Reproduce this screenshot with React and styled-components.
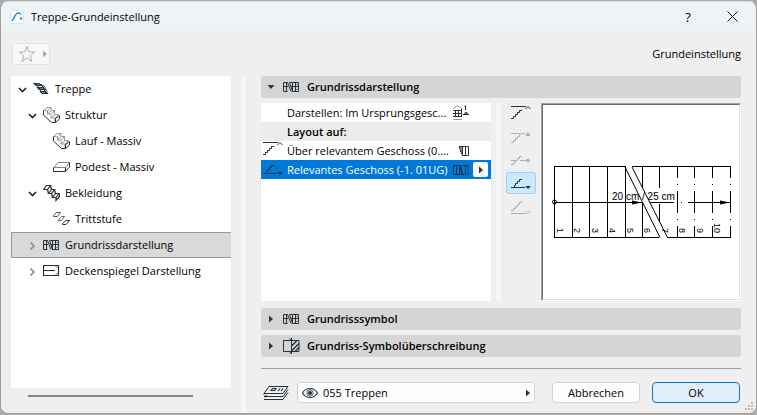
import styled, { createGlobalStyle, css } from 'styled-components';

const ink = '#26323a';

const GlobalStyle = createGlobalStyle`
  * {
    box-sizing: border-box;
  }

  body {
    margin: 0;
    background: #adadad;
    color: #000000;
    font-family: 'Open Sans', 'Noto Sans', sans-serif;
    font-size: 11px;
    line-height: 16px;
  }

  button, select {
    font: inherit;
    color: inherit;
    padding: 0;
    margin: 0;
    border: none;
    background: none;
  }

  svg {
    display: block;
    flex-shrink: 0;
  }
`;

const Backdrop = styled.div`
  display: flex;
  min-height: 100vh;
  padding: 1px 0;
`;

const Dialog = styled.section`
  position: relative;
  flex: 1;
  display: flex;
  flex-direction: column;
  background: #efefef;
  border: 1px solid #a0a0a0;
  border-top-color: #d8dcde;
  border-radius: 8px;
  overflow: hidden;
`;

const TitleBar = styled.header`
  display: flex;
  align-items: center;
  height: 29px;
  padding: 0 17px 0 9px;
  background: #eef3f6;
`;

const DialogTitle = styled.h1`
  flex: 1;
  margin: 0 0 0 7px;
  font-size: 11px;
  font-weight: 400;
`;

const TitleButton = styled.button`
  display: flex;
  align-items: center;
  justify-content: center;
  width: 14px;
  height: 20px;
  margin-left: 30px;
  font-size: 13px;
`;

const Toolbar = styled.div`
  display: flex;
  align-items: center;
  justify-content: space-between;
  height: 45px;
  padding: 0 15px 0 11px;
`;

const FavoriteButton = styled.button`
  display: flex;
  align-items: center;
  gap: 5px;
  width: 38px;
  height: 22px;
  padding-left: 5px;
  background: #f8f8f8;
  border: 1px solid #e3e3e3;
  border-radius: 3px;
`;

const Body = styled.div`
  flex: 1;
  display: flex;
  padding: 0 15px 0 10px;
`;

const Sidebar = styled.nav`
  flex: 0 0 220px;
  display: flex;
  flex-direction: column;
`;

const Tree = styled.ul`
  flex: 1;
  margin: 0;
  padding: 0;
  list-style: none;
  background: #ffffff;
`;

const TreeItem = styled.button`
  display: flex;
  align-items: center;
  width: 100%;
  height: 26px;
  padding-left: ${({ $level }) => 7 + $level * 10}px;
  text-align: left;
  white-space: nowrap;

  ${({ $selected }) =>
    $selected &&
    css`
      background: #d9d9d9;
      box-shadow: inset 1px 1px #999999, inset 0 -1px #999999;
    `}
`;

const ChevronSlot = styled.span`
  width: 9px;
  margin-right: 6px;
`;

const TreeLabel = styled.span`
  margin-left: 5px;
`;

const ScrollTrack = styled.div`
  height: 25px;
  padding: 7px 38px 0 17px;
`;

const ScrollThumb = styled.div`
  height: 2px;
  background: #868686;
`;

const Splitter = styled.div`
  width: 5px;
  margin: ${({ $wide }) => ($wide ? '0 15px 0 10px' : '0 5px')};
  background: #f7f7f7;
`;

const Content = styled.main`
  flex: 1;
  min-width: 0;
  display: flex;
  flex-direction: column;
`;

const SectionHeader = styled.button`
  display: flex;
  align-items: center;
  flex-shrink: 0;
  width: 100%;
  height: 22px;
  padding-left: 6px;
  background: #d5d5d5;
  border-radius: 3px;
  font-weight: 600;
  text-align: left;
`;

const ArrowSlot = styled.span`
  width: 8px;
  margin-right: 8px;
`;

const SectionLabel = styled.span`
  margin-left: 7px;
`;

const Sections = styled.div`
  display: flex;
  flex-direction: column;
  gap: 5px;
  margin-top: 7px;
`;

const Panel = styled.div`
  display: flex;
  margin-top: 5px;
`;

const OptionList = styled.div`
  flex: 1;
  min-width: 0;
  background: #ffffff;
`;

const OptionRow = styled.div`
  display: flex;
  align-items: center;
  height: 19px;
  padding: 0 2px 0 1px;
  white-space: nowrap;
  background: ${({ $heading }) => ($heading ? '#ececec' : 'transparent')};
  font-weight: ${({ $heading }) => ($heading ? 600 : 400)};

  ${({ $selected }) =>
    $selected &&
    css`
      background: #0078d7;
      color: #ffffff;
    `}
`;

const OptionIcon = styled.span`
  width: 22px;
  margin-right: 3px;
`;

const OptionLabel = styled.span`
  flex: 1;
  min-width: 0;
`;

const OptionValue = styled.span`
  width: 17px;
`;

const OptionAction = styled.span`
  width: 19px;
  padding-left: 3px;
`;

const FlyoutButton = styled.button`
  display: flex;
  align-items: center;
  justify-content: center;
  width: 15px;
  height: 15px;
  background: #f8f8f8;
  border-radius: 2px;
`;

const StoryButtons = styled.div`
  display: flex;
  flex-direction: column;
  gap: 1px;
  margin-right: 5px;
`;

const StoryButton = styled.button`
  display: flex;
  align-items: center;
  justify-content: center;
  width: 30px;
  height: 22px;
  border: 1px solid ${({ $active }) => ($active ? '#99d1ff' : 'transparent')};
  border-radius: 3px;
  background: ${({ $active }) => ($active ? '#cce8ff' : 'transparent')};
`;

const Preview = styled.div`
  border: 1px solid;
  border-color: #a0a0a0 #ffffff #ffffff #a0a0a0;
`;

const PreviewInner = styled.div`
  border: 1px solid;
  border-color: #696969 #e3e3e3 #e3e3e3 #696969;
  background: #ffffff;
`;

const Footer = styled.footer`
  display: flex;
  align-items: center;
  margin-top: 11px;
  padding: 13px 1px 10px 2px;
  border-top: 1px solid #a0a0a0;
`;

const LayerField = styled.label`
  flex: 1;
  display: flex;
  align-items: center;
  height: 21px;
  margin: 0 17px 0 8px;
  padding: 0 2px 0 4px;
  background: #fdfdfd;
  border: 1px solid #d0d0d0;
  border-radius: 3px;
`;

const LayerSelect = styled.select`
  flex: 1;
  min-width: 0;
  height: 19px;
  margin-left: 5px;
  appearance: none;
  outline: none;
`;

const DialogButton = styled.button`
  width: 88px;
  height: 21px;
  margin-right: ${({ $primary }) => ($primary ? 0 : 12)}px;
  background: ${({ $primary }) => ($primary ? '#e0eef9' : '#fdfdfd')};
  border: 1px solid ${({ $primary }) => ($primary ? '#0078d4' : '#d0d0d0')};
  border-radius: 4px;
`;

const Grip = styled.svg`
  position: absolute;
  right: 2px;
  bottom: 2px;
`;

function Icon({ width = 17, height = 18, color = ink, children }) {
  return (
    <svg width={width} height={height} viewBox={`0 0 ${width} ${height}`} fill="none" stroke={color} aria-hidden="true">
      {children}
    </svg>
  );
}

function Chevron({ open }) {
  return (
    <Icon width={9} height={9} color={open ? '#222222' : '#8a8a8a'}>
      <path d={open ? 'M1 3L4.5 6.5L8 3' : 'M2.5 1.5L6 5L2.5 8.5'} strokeWidth="1.6" />
    </Icon>
  );
}

function Arrow({ open, color = '#333333' }) {
  return (
    <svg width="8" height="8" viewBox="0 0 8 8" fill={color} aria-hidden="true">
      <path d={open ? 'M0.5 2H7.5L4 6Z' : 'M2 0.5L6 4L2 7.5Z'} />
    </svg>
  );
}

function StairIcon() {
  return (
    <Icon>
      <path d="M0.5 3.5H6L9 5.5H3ZM4 7.5H11L13 9.5H6ZM7 11.5H13L15 13.5H9Z" fill="#777f84" />
      <path d="M2.5 5.5H10.5L12 7.5M5.5 9.5H13L14 11.5M3 3.5L7 9.5L9 13.5M8 4L10 7.5L13 13.5" />
    </Icon>
  );
}

function FlightIcon() {
  return (
    <Icon>
      <g stroke="#92989c">
        <path d="M0.5 4.500L4 1.500H8L4.500 5V8L8.500 4.500H11.500L8 8.500V12L12 8.500H15.500L12 12.500V16" />
        <path d="M8 1.500V4.500M11.500 4.500V8.500M0.500 4.500L4.500 5M4.500 8H8M8.500 12H12" />
      </g>
      <path d="M0.500 4.500V9L8.500 16.500H12.500L16.500 13V9.500L12.500 12.500V16.500" />
    </Icon>
  );
}

function LandingIcon() {
  return (
    <Icon>
      <path d="M1 9.5L5 4.5H16.5L12.5 9.5Z" stroke="#7c8589" />
      <path d="M0.5 9.5V13.5H12.5L16.5 9V4.5M12.5 9.5V13.5" />
    </Icon>
  );
}

function CladdingIcon() {
  return (
    <Icon>
      <path d="M0.5 5.5L3.5 1.5H7.5L4.5 5.5ZM5.5 9.5L8.5 5.5H11.5L8.5 9.5ZM9.5 13.5L12.5 9.5H16L13 13.5Z" strokeWidth="1.2" />
      <path d="M4.5 5.5L5.5 9.5M7.5 1.5L8.5 5.5M8.5 9.5L9.5 13.5M11.5 5.5L12.5 9.5M13 13.5V16.5L16.5 12.5V9.5" strokeWidth="1.2" />
    </Icon>
  );
}

function TreadIcon() {
  return (
    <Icon>
      <path d="M0.5 5.5L3.5 2.5H7.5L4.5 6.5H0.5Z" stroke="#4b565c" />
      <path d="M5 10.5L8.5 6.5H11.5L8.5 10.5Z" stroke="#5d676c" />
      <path d="M9.5 13.5L13 10.5H16.5L13 14.5H9.5Z" />
    </Icon>
  );
}

function PlanIcon() {
  return (
    <Icon height={11}>
      <path d="M4.500 0.500H0.500V9.500H4.500M3.500 0.500V9.500M0.500 4.500H5M4.500 0.500L8 9.500" />
      <path d="M6.500 0.500L9.500 9.500H15.500V0.500ZM9.500 0.500V9.500M12.500 0.500V9.500M8 4.500H15.500" />
      <path d="M13 2.500H15.500M13 7.500H15.500" stroke="#7b8489" />
    </Icon>
  );
}

function CeilingIcon() {
  return (
    <Icon height={12}>
      <path d="M0.5 0.5H15.5V10.5H0.5ZM0.5 5.5H12" strokeWidth="1.2" />
      <path d="M12.5 1L14.5 3M12.5 10L14.5 8" stroke="#7b8489" />
    </Icon>
  );
}

function OverrideIcon() {
  return (
    <Icon>
      <path d="M8.5 3.5H0.5V14.5H8.5M8.5 1V17M8.5 3.5H16V14.5H8.5" />
      <path d="M8.500 9L14 3.500M8.500 14L16 6.500M12 14.500L16 10.500" strokeWidth="1.400" />
      <path d="M6.5 1.5L8.5 3.5M6.5 16.5L8.5 14.5" />
    </Icon>
  );
}

const storyShapes = {
  above: (
    <>
      <path d="M1 0.5H16M1 12.5H3.5V10.5H5.5V8.5H7.5V6.5H9.5V4.5H12" />
      <path d="M15.5 3L18 0.5L20.5 3" />
    </>
  ),
  upper: (
    <>
      <path d="M1 4.5H10M11 4.5H15M1 13.5H3.5V11.5H5.5V9.5H7.5V7.5H9.5V5.5H11" />
      <path d="M16 6.5L18 3.5L20 6.5Z" fill="currentColor" />
    </>
  ),
  middle: (
    <>
      <path d="M1 8.5H6M10 8.5H17M1 12.5H3.5V10.5H5.5V8.5H7.5V6.5H9.5V4.5H12" />
      <circle cx="18" cy="8.5" r="1.5" fill="currentColor" />
    </>
  ),
  lower: (
    <>
      <path d="M1 12.5H4.5V10.5H5.5V8.5H7.5V6.5H9.5V4.5H12M5 12.5H15" />
      <path d="M16 11.5H20L18 13.5Z" fill="currentColor" />
    </>
  ),
  below: (
    <>
      <path d="M1 12.5H3.5V10.5H5.5V8.5H7.5V6.5H9.5V4.5H11.5V3M1 15.5H16" />
      <path d="M15.5 13L18 15.5L20.5 13" />
    </>
  ),
};

function StoryIcon({ kind, muted }) {
  const color = muted ? '#b0b0b0' : ink;
  return (
    <svg width="22" height="17" viewBox="0 0 22 17" fill="none" stroke={color} color={color} aria-hidden="true">
      {storyShapes[kind]}
    </svg>
  );
}

function HomeStoryIcon() {
  return (
    <Icon height={16}>
      <path d="M0.5 3.5L4.5 0.5L8.5 3.5M0.5 14.5H9" stroke="#8c9498" />
      <path d="M0 5.5H9M0 8.5H9M0 11.5H9M2.5 5.5V12M8.5 3.5V12M5.5 5.5V12" />
      <path d="M11.5 1.5L12.5 0.5V5M10 9.5H16M11.5 9L13 7L14.5 9Z" />
    </Icon>
  );
}

function CutPlanIcon() {
  return (
    <Icon height={10}>
      <path d="M6 0.5H15.5V9.5H9.5ZM9.5 0.5V9.5M12.5 0.5V9.5M8 0.5V6" />
    </Icon>
  );
}

function DashedPlanIcon() {
  return (
    <Icon height={10}>
      <path d="M0.5 0.5H6L10 9.5H0.5ZM3.5 0.5V9.5M6.5 0.5V9.5M8.5 1V9.5" />
      <path d="M7 0.5H15.5V9.5H10M12.5 0.5V9.5" strokeDasharray="2 1" />
    </Icon>
  );
}

function LayersIcon() {
  return (
    <Icon width={26} height={16}>
      <path d="M1 8.5L6 1.5H25L20 8.5Z" />
      <path d="M1 8.5V9.5M4 10.5L1 11.5H20L25 4.5M2 11.5V12.5M1 14.5H20L25 7.5" />
      <path d="M8 5.5L9.5 3.5H13L11.5 5.5ZM15 6L17 3.5M18 6L20 3.5" strokeWidth="1.2" />
    </Icon>
  );
}

function EyeIcon() {
  return (
    <Icon width={16} height={12}>
      <path d="M0.5 6C4 0 12 0 15.5 6C12 12 4 12 0.5 6Z" strokeWidth="1.2" />
      <circle cx="8" cy="6" r="3.2" strokeWidth="0.8" />
      <circle cx="8" cy="6" r="2" fill={ink} stroke="none" />
    </Icon>
  );
}

const stepNumbers = [1, 2, 3, 4, 5, 6, 7, 8, 9, 10];

function StairPreview() {
  return (
    <svg
      width="196"
      height="194"
      viewBox="543 105 196 194"
      fill="none"
      stroke="#000000"
      role="img"
      aria-label="Treppe"
    >
      <path
        d="M554.5 166.5H625M632 166.5H731M554.5 237.5H659M667 237.5H731M554.5 166V238M572.5 166V238M589.5 166V238M607.5 166V238M625.5 166V238M642.5 166V188M642.5 203V238M659.5 166V188M659.5 204V222"
        shapeRendering="crispEdges"
      />
      <path
        d="M677.5 166V238M694.5 166V238M712.5 166V238M730.5 166V238"
        strokeDasharray="12 6 1 6 22 6 1 6 12"
        shapeRendering="crispEdges"
      />
      <path d="M554.5 202.5H643M650 202.5H674M681 202.5H682M688 202.5H731" shapeRendering="crispEdges" />
      <path d="M625 167L660 237.5M632 167L667.5 237.5" />
      <path d="M632 200.5L642 202.5L632 204.5ZM720 200.5L730 202.5L720 204.5Z" fill="#000000" stroke="none" />
      <circle cx="554.5" cy="202" r="2" />
      <g fill="#000000" stroke="none" fontFamily="'Liberation Sans', Arial, sans-serif" fontSize="10">
        <text x="612" y="200">20 cm / 25 cm</text>
        {stepNumbers.map((n, i) => (
          <text
            key={n}
            fontSize="9"
            transform={`translate(${557 + Math.floor(i * 17.5)} ${n > 9 ? 223 : 228}) rotate(90)`}
          >
            {n}
          </text>
        ))}
      </g>
    </svg>
  );
}

const treeItems = [
  { label: 'Treppe', level: 0, icon: StairIcon, open: true },
  { label: 'Struktur', level: 1, icon: FlightIcon, open: true },
  { label: 'Lauf - Massiv', level: 2, icon: FlightIcon, leaf: true },
  { label: 'Podest - Massiv', level: 2, icon: LandingIcon, leaf: true },
  { label: 'Bekleidung', level: 1, icon: CladdingIcon, open: true },
  { label: 'Trittstufe', level: 2, icon: TreadIcon, leaf: true },
  { label: 'Grundrissdarstellung', level: 1, icon: PlanIcon, selected: true },
  { label: 'Deckenspiegel Darstellung', level: 1, icon: CeilingIcon },
];

const stories = [
  { kind: 'above', label: 'Oberhalb' },
  { kind: 'upper', label: 'Eins darüber', muted: true },
  { kind: 'middle', label: 'Ursprung', muted: true },
  { kind: 'lower', label: 'Relevant', active: true },
  { kind: 'below', label: 'Unterhalb', muted: true },
];

function Option({ icon, label, value, action, heading, selected }) {
  return (
    <OptionRow $heading={heading} $selected={selected}>
      <OptionIcon>{icon}</OptionIcon>
      <OptionLabel>{label}</OptionLabel>
      <OptionValue>{value}</OptionValue>
      <OptionAction>{action}</OptionAction>
    </OptionRow>
  );
}

function Section({ open, icon, label }) {
  return (
    <SectionHeader type="button" aria-expanded={Boolean(open)}>
      <ArrowSlot>
        <Arrow open={open} />
      </ArrowSlot>
      {icon}
      <SectionLabel>{label}</SectionLabel>
    </SectionHeader>
  );
}

export default function App() {
  return (
    <Backdrop>
      <GlobalStyle />
      <Dialog>
        <TitleBar>
          <svg width="14" height="14" viewBox="0 0 14 14" fill="none" aria-hidden="true">
            <rect x="0.5" y="0.5" width="13" height="13" rx="1.5" fill="#ffffff" stroke="#dfe3e5" />
            <path d="M2 11C4 9 5 3 8.500 3C10 3 10.500 3.500 11 4.500" stroke="#0d9dca" strokeWidth="1.500" />
            <circle cx="11" cy="8.500" r="1.200" fill="#0d9dca" />
          </svg>
          <DialogTitle>Treppe-Grundeinstellung</DialogTitle>
          <TitleButton type="button">?</TitleButton>
          <TitleButton type="button" aria-label="Schließen">
            <Icon width={11} height={11} color="#111111">
              <path d="M0.5 0.5L10.5 10.5M10.5 0.5L0.5 10.5" />
            </Icon>
          </TitleButton>
        </TitleBar>

        <Toolbar>
          <FavoriteButton type="button" aria-label="Favoriten">
            <Icon width={18} height={18} color="#b0b0b0">
              <path d="M9 1.500L11 7H17L12.300 10.500L14 16.500L9 13L4 16.500L5.700 10.500L1 7H7Z" />
            </Icon>
            <Arrow color="#ababab" />
          </FavoriteButton>
          <span>Grundeinstellung</span>
        </Toolbar>

        <Body>
          <Sidebar>
            <Tree>
              {treeItems.map(({ label, level, icon: ItemIcon, open, leaf, selected }) => (
                <li key={label}>
                  <TreeItem type="button" $level={level} $selected={selected}>
                    <ChevronSlot>{!leaf && <Chevron open={open} />}</ChevronSlot>
                    <ItemIcon />
                    <TreeLabel>{label}</TreeLabel>
                  </TreeItem>
                </li>
              ))}
            </Tree>
            <ScrollTrack>
              <ScrollThumb />
            </ScrollTrack>
          </Sidebar>

          <Splitter $wide />

          <Content>
            <Section open icon={<PlanIcon />} label="Grundrissdarstellung" />
            <Panel>
              <OptionList>
                <Option label="Darstellen: Im Ursprungsgesc..." value={<HomeStoryIcon />} />
                <Option heading label="Layout auf:" />
                <Option
                  icon={<StoryIcon kind="above" />}
                  label="Über relevantem Geschoss (0...."
                  value={<CutPlanIcon />}
                />
                <Option
                  selected
                  icon={<StoryIcon kind="lower" />}
                  label="Relevantes Geschoss (-1. 01UG)"
                  value={<DashedPlanIcon />}
                  action={
                    <FlyoutButton type="button" aria-label="Auswahl öffnen">
                      <Arrow />
                    </FlyoutButton>
                  }
                />
              </OptionList>
              <Splitter />
              <StoryButtons>
                {stories.map(({ kind, label, muted, active }) => (
                  <StoryButton key={kind} type="button" aria-label={label} $active={active}>
                    <StoryIcon kind={kind} muted={muted} />
                  </StoryButton>
                ))}
              </StoryButtons>
              <Preview>
                <PreviewInner>
                  <StairPreview />
                </PreviewInner>
              </Preview>
            </Panel>

            <Sections>
              <Section icon={<PlanIcon />} label="Grundrisssymbol" />
              <Section icon={<OverrideIcon />} label="Grundriss-Symbolüberschreibung" />
            </Sections>

            <Footer>
              <LayersIcon />
              <LayerField>
                <EyeIcon />
                <LayerSelect aria-label="Ebene" defaultValue="055">
                  <option value="055">055 Treppen</option>
                </LayerSelect>
                <Arrow />
              </LayerField>
              <DialogButton type="button">Abbrechen</DialogButton>
              <DialogButton type="button" $primary>
                OK
              </DialogButton>
            </Footer>
          </Content>
        </Body>

        <Grip width="9" height="9" viewBox="0 0 9 9" fill="#bdbdbd" aria-hidden="true">
          <path d="M6 0H8V2H6ZM3 3H5V5H3ZM6 3H8V5H6ZM0 6H2V8H0ZM3 6H5V8H3ZM6 6H8V8H6Z" />
        </Grip>
      </Dialog>
    </Backdrop>
  );
}
